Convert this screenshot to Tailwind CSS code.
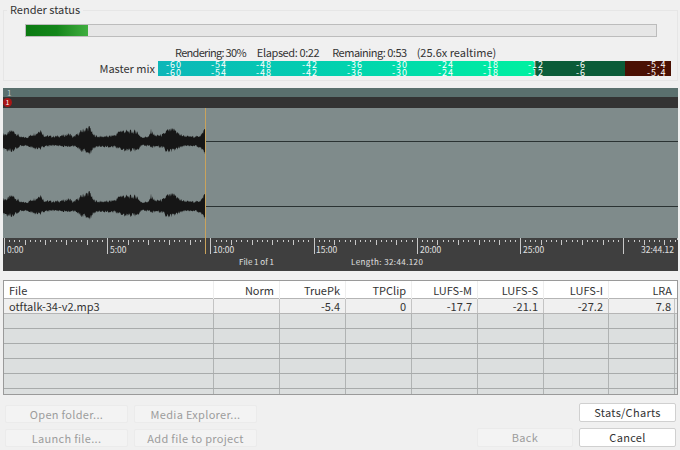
<!DOCTYPE html>
<html lang="en">

<head>
    <meta charset="UTF-8">
    <script src="https://cdn.jsdelivr.net/npm/@tailwindcss/browser@4"></script>
    <title>Render status</title>
</head>

<body class="w-[680px] h-[450px] overflow-hidden bg-[#f0f0f0] text-[#333] text-[11px] leading-none font-['Noto_Sans_CJK_JP','Noto_Sans',sans-serif]">

    <!-- render status group -->
    <div class="relative mt-[10px] ml-[3px] w-[675px] h-[71px] border border-[#e6e6e6] pt-[13px]">
        <span class="absolute left-[3px] top-[-7px] bg-[#f0f0f0] px-[3px] tracking-[0px]">Render status</span>
        <div class="ml-[21px] w-[632px] h-[13px] bg-[#e6e6e6] border border-[#bcbcbc]">
            <div class="w-[62px] h-full bg-linear-to-r from-[#0b7a12] via-[#13861a] to-[#3fae3f]"></div>
        </div>
        <div class="flex ml-[171px] mt-[9px] h-[12px] items-center whitespace-pre">
            <span class="tracking-[-0.7px] mr-[11px]">Rendering: 30%</span><span class="tracking-[-0.4px] mr-[13px]">Elapsed: 0:22</span><span class="tracking-[-0.5px] mr-[10px]">Remaining: 0:53</span><span>(25.6x realtime)</span>
        </div>
        <div class="flex items-center mt-[3px]">
            <span class="w-[154px] text-right pr-[3px]">Master mix</span>
            <div class="relative flex w-[513px] h-[15px] overflow-hidden text-white text-[9px] leading-[7.5px] tracking-[1px]">
                <div class="w-[376px] bg-linear-to-r from-[#0db6b8] to-[#00f0a0]"></div>
                <div class="w-[91px] bg-[#0b5c38]"></div>
                <div class="w-[46px] bg-[#4a1003]"></div>
                <span class="absolute left-[8px] top-0">-60<br>-60</span>
                <span class="absolute left-[53px] top-0">-54<br>-54</span>
                <span class="absolute left-[98px] top-0">-48<br>-48</span>
                <span class="absolute left-[144px] top-0">-42<br>-42</span>
                <span class="absolute left-[189px] top-0">-36<br>-36</span>
                <span class="absolute left-[234px] top-0">-30<br>-30</span>
                <span class="absolute left-[280px] top-0">-24<br>-24</span>
                <span class="absolute left-[325px] top-0">-18<br>-18</span>
                <span class="absolute left-[370px] top-0">-12<br>-12</span>
                <span class="absolute left-[418px] top-0">-6<br>-6</span>
                <span class="absolute left-[489px] top-0">-5.4<br>-5.4</span>
            </div>
        </div>
    </div>

    <!-- waveform -->
    <div class="relative mt-[7px] ml-[3px] w-[675px] h-[183px] bg-[#3f3f3f]">
        <div class="h-[9px] bg-[#5a706e] text-[#b9c6c4] text-[8px] pl-[4px] leading-[9px]">1</div>
        <div class="relative h-[11px] bg-[#333333]">
            <span class="absolute left-0 top-[1px] w-[9px] h-[9px] rounded-full bg-[#a81616] text-white text-[7px] leading-[9px] text-center">1</span>
        </div>
        <svg class="block" width="675" height="130" viewBox="0 0 675 130">
            <rect width="675" height="130" fill="#7f8b8b"></rect>
            <path id="wave1" fill="#161616"></path>
            <path id="wave2" fill="#161616"></path>
            <line x1="203" y1="33.5" x2="675" y2="33.5" stroke="#2a3232"></line>
            <line x1="203" y1="98.5" x2="675" y2="98.5" stroke="#2a3232"></line>
        </svg>
        <svg class="block" width="675" height="17" viewBox="0 0 675 17">
            <path id="ticks" stroke="#c8c8c8" fill="none"></path>
        </svg>
        <span class="absolute left-[4px] top-[157px] text-[#e0e0e0] text-[8.5px]">0:00</span>
        <span class="absolute left-[107px] top-[157px] text-[#e0e0e0] text-[8.5px]">5:00</span>
        <span class="absolute left-[210px] top-[157px] text-[#e0e0e0] text-[8.5px]">10:00</span>
        <span class="absolute left-[313px] top-[157px] text-[#e0e0e0] text-[8.5px]">15:00</span>
        <span class="absolute left-[417px] top-[157px] text-[#e0e0e0] text-[8.5px]">20:00</span>
        <span class="absolute left-[520px] top-[157px] text-[#e0e0e0] text-[8.5px]">25:00</span>
        <span class="absolute right-[4px] top-[157px] text-[#e0e0e0] text-[8.5px]">32:44.12</span>
        <span class="absolute left-[236px] top-[170px] text-[#e0e0e0] text-[8px]">File 1 of 1</span>
        <span class="absolute left-[348px] top-[170px] text-[#e0e0e0] text-[8px] tracking-[0.4px]">Length: 32:44.120</span>
        <!-- edit cursor -->
        <div class="absolute left-[202px] top-[20px] w-px h-[146px] bg-[#c9a35c]"></div>
    </div>

    <!-- stats table -->
    <div class="mt-[9px] ml-[3px] w-[675px] h-[115px] overflow-hidden border border-[#9a9a9a]">
        <div class="grid grid-cols-[210px_66px_66px_66px_66px_66px_65px_66px] h-[18px] bg-white border-b border-[#b5b5b5] leading-[18px] text-right">
            <div class="px-[5px] text-left border-r border-[#eeeeee]">File</div>
            <div class="pr-[5px] border-r border-[#eeeeee]">Norm</div>
            <div class="pr-[5px] border-r border-[#eeeeee]">TruePk</div>
            <div class="pr-[5px] border-r border-[#eeeeee]">TPClip</div>
            <div class="pr-[5px] border-r border-[#eeeeee]">LUFS-M</div>
            <div class="pr-[5px] border-r border-[#eeeeee]">LUFS-S</div>
            <div class="pr-[5px] border-r border-[#eeeeee]">LUFS-I</div>
            <div class="pr-[3px]">LRA</div>
        </div>
        <div class="grid grid-cols-[210px_66px_66px_66px_66px_66px_65px_66px] h-[15px] bg-[#f0f0f0] border-b border-[#b5b5b5] leading-[14px] text-right">
            <div class="px-[5px] text-left border-r border-[#c4c4c4]">otftalk-34-v2.mp3</div>
            <div class="pr-[5px] border-r border-[#c4c4c4]"></div>
            <div class="pr-[5px] border-r border-[#c4c4c4]">-5.4</div>
            <div class="pr-[5px] border-r border-[#c4c4c4]">0</div>
            <div class="pr-[5px] border-r border-[#c4c4c4]">-17.7</div>
            <div class="pr-[5px] border-r border-[#c4c4c4]">-21.1</div>
            <div class="pr-[5px] border-r border-[#c4c4c4]">-27.2</div>
            <div class="pr-[3px] border-r border-[#c4c4c4]">7.8</div>
        </div>
        <div id="emptyrows"></div>
    </div>

    <!-- buttons -->
    <div class="flex justify-between mt-[10px] ml-[5px] mr-[4px]">
        <div class="grid grid-cols-[123px_123px] gap-x-[6px] gap-y-[6px] text-[#9c9c9c] tracking-[0.3px]">
            <div class="h-[18px] flex items-center justify-center bg-[#f3f3f3] border border-[#ebebeb] rounded-[2px]">Open folder...</div>
            <div class="h-[18px] flex items-center justify-center bg-[#f3f3f3] border border-[#ebebeb] rounded-[2px]">Media Explorer...</div>
            <div class="h-[18px] flex items-center justify-center bg-[#f3f3f3] border border-[#ebebeb] rounded-[2px]">Launch file...</div>
            <div class="h-[18px] flex items-center justify-center bg-[#f3f3f3] border border-[#ebebeb] rounded-[2px]">Add file to project</div>
        </div>
        <div class="grid grid-cols-[96px_97px] gap-x-[6px] gap-y-[5px] tracking-[0.3px] -mt-[2px]">
            <div></div>
            <div class="h-[19px] flex items-center justify-center bg-white border border-[#d0d0d0] rounded-[2px]">Stats/Charts</div>
            <div class="h-[19px] flex items-center justify-center bg-[#f3f3f3] border border-[#ebebeb] rounded-[2px] text-[#9c9c9c]">Back</div>
            <div class="h-[19px] flex items-center justify-center bg-white border border-[#d0d0d0] rounded-[2px]">Cancel</div>
        </div>
    </div>

    <script>
        // x, amplitude up, amplitude down - read off the reference
        const env = [[0,9,9],[4,9,10],[9,13,11],[14,9,8],[18,5,5],[24,5,5],[30,9,8],[34,10,9],[37,15,9],[41,7,6],[50,6,5],[60,7,6],[67,9,6],[70,5,5],[75,9,8],[79,13,11],[83,15,12],[87,17,14],[90,8,8],[95,6,6],[105,6,6],[113,8,7],[117,13,9],[125,12,11],[134,12,10],[138,5,5],[146,6,5],[148,13,7],[152,7,6],[160,8,7],[164,13,12],[172,14,10],[177,8,7],[185,6,5],[195,6,6],[199,9,9],[202,16,14]];

        function amp(x, i) {
            let k = 0;
            while (k < env.length - 2 && env[k + 1][0] < x) k++;
            const a = env[k], b = env[k + 1];
            const t = Math.min(1, (x - a[0]) / (b[0] - a[0]));
            return a[i] + (b[i] - a[i]) * t;
        }

        function noise(x) {
            const n = Math.sin(x * 12.9898) * 43758.5453;
            return n - Math.floor(n);
        }

        // solid core with spiky peaks on top, half pixel steps
        function wave(cy) {
            let top = "", bottom = "";
            for (let s = 0; s <= 404; s++) {
                const x = s / 2;
                const u = amp(x, 1) * (0.6 + 0.4 * noise(s));
                const v = amp(x, 2) * (0.6 + 0.4 * noise(s + 900));
                top += `L${x} ${(cy - u).toFixed(1)} `;
                bottom = `L${x} ${(cy + v).toFixed(1)} ` + bottom;
            }
            return "M" + top.slice(1) + bottom + "Z";
        }

        document.getElementById("wave1").setAttribute("d", wave(33.5));
        document.getElementById("wave2").setAttribute("d", wave(98.5));

        // ruler: major tick every 5:00, mid tick every minute, dots in between
        let d = "";
        const perMin = 103.2 / 5;
        for (let i = 0; i <= 131; i++) {
            const x = Math.round(1 + i * perMin / 4) + 0.5;
            if (i % 20 === 0) d += `M${x} 0V16`;
            else if (i % 4 === 0) d += `M${x} 2V7`;
            else d += `M${x} 2V4`;
        }
        d += "M674.5 0V2";
        document.getElementById("ticks").setAttribute("d", d);

        let rows = "";
        for (let r = 0; r < 6; r++) {
            rows += `<div class="grid grid-cols-[210px_66px_66px_66px_66px_66px_65px_66px] h-[15px] bg-[#dcdfdf] border-b border-[#a8abab]">
                <div class="border-r border-[#b0b3b3]"></div><div class="border-r border-[#b0b3b3]"></div><div class="border-r border-[#b0b3b3]"></div><div class="border-r border-[#b0b3b3]"></div><div class="border-r border-[#b0b3b3]"></div><div class="border-r border-[#b0b3b3]"></div><div class="border-r border-[#b0b3b3]"></div><div class="border-r border-[#b0b3b3]"></div>
            </div>`;
        }
        document.getElementById("emptyrows").innerHTML = rows;
    </script>

</body>

</html>
